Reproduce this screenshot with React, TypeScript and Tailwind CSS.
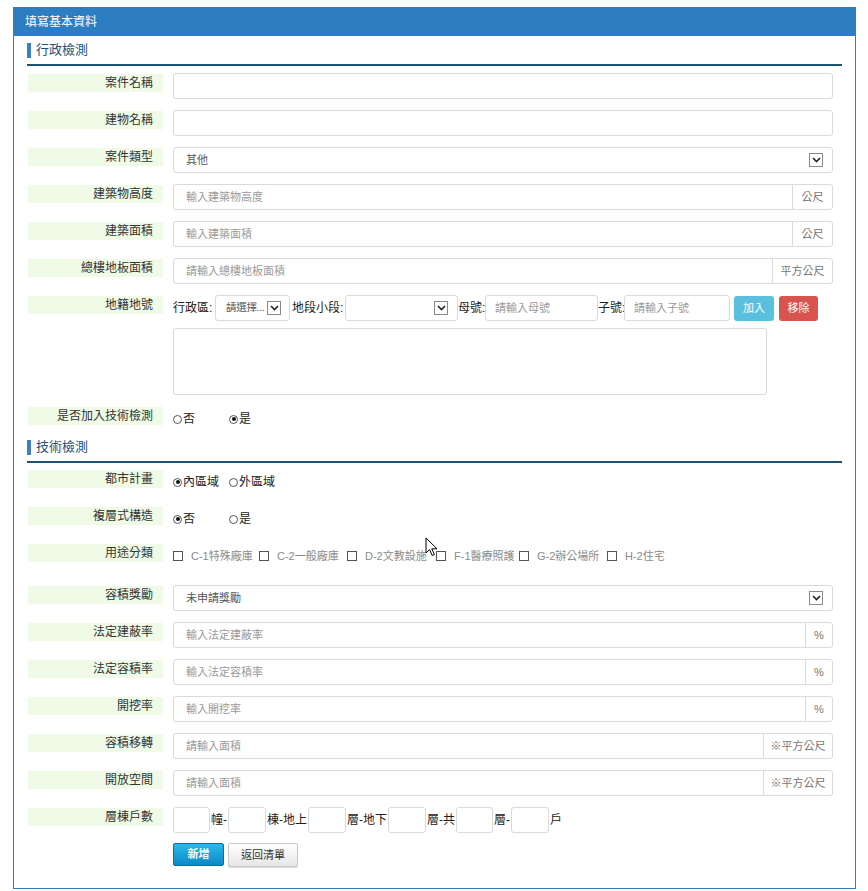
import React from "react";

function Chevron() {
  return (
    <span className="flex h-[14px] w-[14px] shrink-0 items-center justify-center border border-[#8a8a8a] bg-white">
      <svg width="9" height="6" viewBox="0 0 9 6">
        <path d="M1 1l3.5 3.5L8 1" fill="none" stroke="#222" strokeWidth="1.6" />
      </svg>
    </span>
  );
}

function Label({ text }: { text: string }) {
  return (
    <div className="mt-px h-[18px] w-[135px] shrink-0 bg-[#effbe7] pr-[10px] text-right text-[12px] leading-[18px] text-[#333]">
      {text}
    </div>
  );
}

function Row({
  label,
  children,
  className = "mb-[11px]",
}: {
  label: string;
  children: React.ReactNode;
  className?: string;
}) {
  return (
    <div className={`flex items-start gap-[10px] pl-px pr-[9px] ${className}`}>
      <Label text={label} />
      <div className="min-w-0 flex-1">{children}</div>
    </div>
  );
}

function TextField({ placeholder, addon, addonW }: { placeholder?: string; addon?: string; addonW?: string }) {
  return (
    <div className="flex h-[26px] overflow-hidden rounded-[3px] border border-[#dadada] bg-white">
      <input
        className="min-w-0 flex-1 bg-transparent pl-[12px] text-[11px] text-[#555] outline-none placeholder:text-[#9a9a9a]"
        placeholder={placeholder}
      />
      {addon && (
        <span className={`flex shrink-0 items-center justify-center border-l border-[#dadada] text-[11px] text-[#777] ${addonW}`}>
          {addon}
        </span>
      )}
    </div>
  );
}

function SelectBox({ value, className = "" }: { value: string; className?: string }) {
  return (
    <div className={`flex h-[26px] items-center rounded-[3px] border border-[#dadada] bg-white pl-[12px] pr-[9px] ${className}`}>
      <span className="min-w-0 flex-1 whitespace-nowrap text-[11px] text-[#555]">{value}</span>
      <Chevron />
    </div>
  );
}

function Radio({ label, checked, className = "" }: { label: string; checked?: boolean; className?: string }) {
  return (
    <span className={`flex items-center ${className}`}>
      <span className="flex h-[9px] w-[9px] items-center justify-center rounded-full border border-[#555] bg-white">
        {checked && <span className="h-[4px] w-[4px] rounded-full bg-[#111]" />}
      </span>
      <span className="ml-px text-[12px] text-[#222]">{label}</span>
    </span>
  );
}

function Check({ label, className }: { label: string; className: string }) {
  return (
    <span className={`flex items-center ${className}`}>
      <span className="h-[10px] w-[10px] border border-[#555] bg-white" />
      <span className="ml-[8px] whitespace-nowrap text-[11px] text-[#8a8a8a]">{label}</span>
    </span>
  );
}

function SectionTitle({ text, className }: { text: string; className: string }) {
  return (
    <div className={`flex items-center border-b-2 border-[#1d5275] pb-[5px] ${className}`}>
      <span className="h-[15px] w-[4px] bg-[#3c80c2]" />
      <span className="ml-[5px] text-[13px] leading-[18px] text-[#24507a]">{text}</span>
    </div>
  );
}

function Small({ w }: { w: string }) {
  return <input className={`h-[26px] rounded-[3px] border border-[#dadada] bg-white outline-none ${w}`} />;
}

export default function App() {
  return (
    <div className="relative min-h-[891px] bg-white pt-[7px] font-['Liberation_Sans','Noto_Sans_CJK_TC',sans-serif]">
      <div className="ml-[13px] w-[843px] border border-[#2d7dc3] bg-white">
        <div className="flex h-[28px] items-center bg-[#2d7dc3] pl-[11px] text-[12px] text-white">填寫基本資料</div>
        <div className="px-[13px] pb-[21px]">
          <SectionTitle text="行政檢測" className="mb-[7px] pt-[5px]" />

          <Row label="案件名稱">
            <TextField />
          </Row>
          <Row label="建物名稱">
            <TextField />
          </Row>
          <Row label="案件類型">
            <SelectBox value="其他" />
          </Row>
          <Row label="建築物高度">
            <TextField placeholder="輸入建築物高度" addon="公尺" addonW="w-[40px]" />
          </Row>
          <Row label="建築面積">
            <TextField placeholder="輸入建築面積" addon="公尺" addonW="w-[40px]" />
          </Row>
          <Row label="總樓地板面積">
            <TextField placeholder="請輸入總樓地板面積" addon="平方公尺" addonW="w-[60px]" />
          </Row>
          <Row label="地籍地號">
            <div className="flex h-[26px] items-center text-[12px] text-[#222]">
              <span className="w-[42px] whitespace-nowrap">行政區:</span>
              <div className="flex h-[26px] w-[75px] items-center rounded-[3px] border border-[#dadada] bg-white pl-[10px] pr-[8px]">
                <span className="min-w-0 flex-1 whitespace-nowrap text-[10.5px] tracking-[-0.3px] text-[#555]">請選擇...</span>
                <Chevron />
              </div>
              <span className="w-[55px] whitespace-nowrap pl-[2px]">地段小段:</span>
              <SelectBox value="" className="w-[113px]" />
              <span className="w-[27px] whitespace-nowrap">母號:</span>
              <input
                className="h-[26px] w-[113px] rounded-[3px] border border-[#dadada] pl-[9px] text-[11px] outline-none placeholder:text-[#9a9a9a]"
                placeholder="請輸入母號"
              />
              <span className="w-[26px] whitespace-nowrap">子號:</span>
              <input
                className="h-[26px] w-[106px] rounded-[3px] border border-[#dadada] pl-[9px] text-[11px] outline-none placeholder:text-[#9a9a9a]"
                placeholder="請輸入子號"
              />
              <button className="ml-[4px] h-[25px] w-[40px] rounded-[3px] bg-[#5bc0de] text-[11px] text-white">加入</button>
              <button className="ml-[5px] h-[25px] w-[39px] rounded-[3px] bg-[#d9534f] text-[11px] text-white">移除</button>
            </div>
            <textarea className="mt-[7px] block h-[67px] w-[594px] resize-none rounded-[3px] border border-[#dadada] outline-none" />
          </Row>
          <Row label="是否加入技術檢測" className="mb-[6px]">
            <div className="flex h-[26px] items-center">
              <Radio label="否" className="w-[56px]" />
              <Radio label="是" checked />
            </div>
          </Row>

          <SectionTitle text="技術檢測" className="mb-[6px]" />

          <Row label="都市計畫">
            <div className="flex h-[26px] items-center">
              <Radio label="內區域" checked className="w-[56px]" />
              <Radio label="外區域" />
            </div>
          </Row>
          <Row label="複層式構造">
            <div className="flex h-[26px] items-center">
              <Radio label="否" checked className="w-[56px]" />
              <Radio label="是" />
            </div>
          </Row>
          <Row label="用途分類" className="mb-[16px]">
            <div className="flex h-[26px] items-center">
              <Check label="C-1特殊廠庫" className="w-[86px]" />
              <Check label="C-2一般廠庫" className="w-[88px]" />
              <Check label="D-2文教設施" className="w-[89px]" />
              <Check label="F-1醫療照護" className="w-[83px]" />
              <Check label="G-2辦公場所" className="w-[88px]" />
              <Check label="H-2住宅" className="w-[60px]" />
            </div>
          </Row>
          <Row label="容積獎勵">
            <SelectBox value="未申請獎勵" />
          </Row>
          <Row label="法定建蔽率">
            <TextField placeholder="輸入法定建蔽率" addon="%" addonW="w-[27px]" />
          </Row>
          <Row label="法定容積率">
            <TextField placeholder="輸入法定容積率" addon="%" addonW="w-[27px]" />
          </Row>
          <Row label="開挖率">
            <TextField placeholder="輸入開挖率" addon="%" addonW="w-[27px]" />
          </Row>
          <Row label="容積移轉">
            <TextField placeholder="請輸入面積" addon="※平方公尺" addonW="w-[69px]" />
          </Row>
          <Row label="開放空間">
            <TextField placeholder="請輸入面積" addon="※平方公尺" addonW="w-[69px]" />
          </Row>
          <Row label="層棟戶數" className="mb-[10px]">
            <div className="flex h-[26px] items-center text-[12px] text-[#222]">
              <Small w="w-[37px]" />
              <span className="px-px">幢-</span>
              <Small w="w-[38px]" />
              <span className="px-px">棟-地上</span>
              <Small w="w-[38px]" />
              <span className="px-px">層-地下</span>
              <Small w="w-[38px]" />
              <span className="px-px">層-共</span>
              <Small w="w-[37px]" />
              <span className="px-px">層-</span>
              <Small w="w-[38px]" />
              <span className="px-px">戶</span>
            </div>
          </Row>
          <div className="flex pl-[146px]">
            <button className="h-[23px] w-[51px] rounded-[2px] border border-[#0a6fa3] bg-linear-to-b from-[#2bb9ee] to-[#0b89c5] text-[11px] font-bold text-white">
              新增
            </button>
            <button className="ml-[4px] h-[24px] w-[70px] rounded-[2px] border border-[#c8c8c8] bg-linear-to-b from-white to-[#e6e6e6] text-[11px] text-[#333] shadow-[0_1px_1px_rgba(0,0,0,0.15)]">
              返回清單
            </button>
          </div>
        </div>
      </div>
      <svg className="absolute left-[425px] top-[537px]" width="13" height="20" viewBox="0 0 13 20">
        <path d="M1 1v15l3.6-3.4 2.6 5.9 2.2-1-2.6-5.7H12z" fill="#fff" stroke="#000" strokeWidth="1" strokeLinejoin="round" />
      </svg>
    </div>
  );
}
